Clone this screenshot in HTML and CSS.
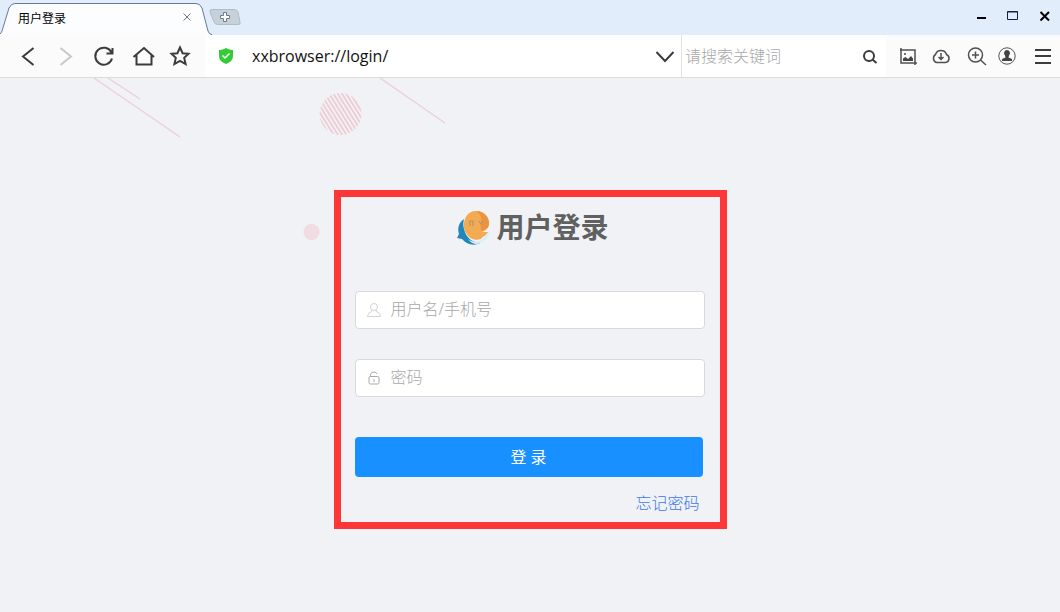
FILE: index.html
```html
<!DOCTYPE html>
<html lang="zh-CN">
<head>
    <meta charset="UTF-8">
    <meta name="viewport" content="width=device-width, initial-scale=1.0">
    <title>用户登录</title>
    <link rel="stylesheet" href="styles.css">
</head>
<body>
    <!-- Tab bar -->
    <header class="tab-bar">
        <div class="tab">
            <svg class="tab-shape" viewBox="0 0 212 35" aria-hidden="true">
                <path d="M-1 34.500 Q1 34 2 31 L9 8 Q11 3.500 15 3.500 H196 Q200 3.500 202 8 L208 31 Q209 34.500 212 34.500 V36 H-1 Z" fill="#fcfdfe" stroke="#66799c"/>
                <path d="M0 35 H210" stroke="#fcfdfe" stroke-width="2"/>
            </svg>
            <span class="tab-title">用户登录</span>
            <button type="button" class="tab-close" aria-label="关闭标签页">
                <svg viewBox="0 0 8 8" width="8" height="8"><path d="M.5 .5 L7.500 7.500 M7.500 .5 L.5 7.500" stroke="#777"/></svg>
            </button>
        </div>
        <button type="button" class="new-tab" aria-label="新建标签页">
            <svg viewBox="0 0 34 17" width="34" height="17">
                <path d="M3 .5 H25 Q28 .5 29 3 L31 13 Q32 15.500 29 15.500 H9 Q6 15.500 5 13 L1 3 Q0 .5 3 .5 Z" fill="#c7d1da" stroke="#b0bcc9"/>
                <path d="M14.500 3.500 h3 v3 h3 v3 h-3 v3 h-3 v-3 h-3 v-3 h3 Z" fill="#fff" stroke="#6f7b88"/>
            </svg>
        </button>
        <div class="window-controls">
            <button type="button" aria-label="最小化">
                <svg viewBox="0 0 12 12" width="12" height="12"><path d="M2 8 H11" stroke="#000" stroke-width="2"/></svg>
            </button>
            <button type="button" aria-label="最大化">
                <svg viewBox="0 0 12 12" width="12" height="12"><path d="M.5 1.500 H10.500 V9.500 H.5 Z M0 2 H11" fill="none" stroke="#14233c"/></svg>
            </button>
            <button type="button" aria-label="关闭">
                <svg viewBox="0 0 12 12" width="12" height="12"><path d="M1.500 2 L10 10.500 M10 2 L1.500 10.500" stroke="#000" stroke-width="2"/></svg>
            </button>
        </div>
    </header>

    <!-- Toolbar -->
    <div class="toolbar">
        <nav class="nav-buttons">
            <button type="button" aria-label="后退">
                <svg viewBox="0 0 24 24"><path d="M17.500 4 L7 12.500 L17.500 21"/></svg>
            </button>
            <button type="button" class="disabled" aria-label="前进">
                <svg viewBox="0 0 24 24"><path d="M6.500 4 L17 12.500 L6.500 21"/></svg>
            </button>
            <button type="button" aria-label="刷新">
                <svg viewBox="0 0 24 24"><path d="M19.500 8.500 A8.500 8.500 0 1 0 20 14.500 M20.500 4 V9.500 H14.500"/></svg>
            </button>
            <button type="button" aria-label="主页">
                <svg viewBox="0 0 24 24"><path d="M3.500 13 L14 4 L24 13 M6.500 11 V20.500 H21.500 V11"/></svg>
            </button>
            <button type="button" aria-label="收藏">
                <svg viewBox="0 0 24 24"><path d="M12 3.500 L14.600 9.200 L20.500 9.800 L16.200 13.900 L17.600 20 L12 16.800 L6.400 20 L7.800 13.900 L3.500 9.800 L9.400 9.200 Z"/></svg>
            </button>
        </nav>
        <div class="address-bar">
            <svg class="shield" viewBox="0 0 16 18" width="16" height="18" aria-hidden="true">
                <path d="M8 1 Q11 3 15 3 V9 Q15 14.500 8 17 Q1 14.500 1 9 V3 Q5 3 8 1 Z" fill="#35cb38"/>
                <path d="M4.500 8.500 L7 11 L11.500 6.500" fill="none" stroke="#fff" stroke-width="1.500"/>
            </svg>
            <input type="text" aria-label="地址" value="xxbrowser://login/">
            <button type="button" aria-label="展开地址列表">
                <svg viewBox="0 0 24 24"><path d="M4.500 8 L13 17 L21.500 8"/></svg>
            </button>
        </div>
        <div class="search-bar">
            <input type="text" aria-label="搜索" placeholder="请搜索关键词">
            <button type="button" aria-label="搜索">
                <svg viewBox="0 0 24 24"><circle cx="11" cy="12" r="5"/><path d="M14.500 15.500 L18.500 19"/></svg>
            </button>
        </div>
        <div class="tools">
            <button type="button" aria-label="截图">
                <svg viewBox="0 0 24 24" class="crop"><path d="M5 4 V19 H21 M4 6 H19 V21"/><path d="M7 17 V14.500 L9.500 13 L12 15 L15 12 L17 14.500 V17 Z" fill="#444" stroke="none"/><circle cx="9" cy="10" r="1" fill="#444" stroke="none"/></svg>
            </button>
            <button type="button" aria-label="下载">
                <svg viewBox="0 0 24 24" class="crop"><path d="M6.500 18.500 A4.500 4.500 0 0 1 5.500 10.500 A5.800 5.800 0 0 1 16.500 10.500 A4.200 4.200 0 0 1 15.500 18.500 Z M11 9 V15.500 M8.500 13 L11 15.500 L13.500 13"/></svg>
            </button>
            <button type="button" aria-label="缩放">
                <svg viewBox="0 0 24 24" class="medium"><circle cx="11.500" cy="11" r="7"/><path d="M16.500 16 L22 21 M8 11 H15 M11.500 7.500 V14.500"/></svg>
            </button>
            <button type="button" aria-label="账户">
                <svg viewBox="0 0 24 24" class="thin"><circle cx="9" cy="12" r="8.200"/><path d="M9 6 A3.200 3.200 0 0 1 11 11.500 L10.500 13.500 L14 15 V17 H4 V15 L7.500 13.500 L7 11.500 A3.200 3.200 0 0 1 9 6 Z" fill="#444" stroke="none"/></svg>
            </button>
            <button type="button" aria-label="菜单">
                <svg viewBox="0 0 24 24"><path d="M3 6 H19 M3 12 H19 M3 19 H19"/></svg>
            </button>
        </div>
    </div>

    <!-- Page content -->
    <main class="page">
        <svg class="decoration" width="460" height="180" viewBox="0 0 460 180" aria-hidden="true">
            <defs>
                <pattern id="stripes" width="3.600" height="4" patternUnits="userSpaceOnUse" patternTransform="rotate(-32)">
                    <rect width="1.700" height="4" fill="#efcad2"/>
                </pattern>
            </defs>
            <path d="M94 0 L180 59 M108 0 L140 21 M380 0 L445 45" stroke="#f0cdd4" stroke-width="1.300"/>
            <circle cx="340.500" cy="36" r="21" fill="url(#stripes)"/>
            <circle cx="311.500" cy="154" r="8" fill="#f2dbe1"/>
        </svg>

        <section class="login-container">
            <h1 class="login-header">
                <svg viewBox="0 0 34 36" width="34" height="36" aria-hidden="true">
                    <path d="M8 10 C3 13 1 19 3 25 L1 29 L6 30 C11 36 18 37 24 34 C16 33 11 29 9 23 C7 18 7 14 8 10 Z" fill="#2386bb"/>
                    <path d="M12 30 C17 34 23 33 27 30 L34 22 C33 29 28 33 21 35 C17 35 14 33 12 30 Z" fill="#d5effb"/>
                    <path d="M20 2 C28 2 33 8 33 14 C33 18 32 20 26 23 H32 C30 27 27 27 25 30 C16 33 10 27 8 19 C7 9 12 2 20 2 Z" fill="#f3aa50"/>
                    <path d="M20 2 C28 2 33 8 33 14 C33 18 31 20 26 22 C22 16 30 9 20 2 Z" fill="#ed933f"/>
                    <path d="M14 17 V12 H17 V17 M23 12 L25 15 L27 12" fill="none" stroke="#b2976d" stroke-width="1.200"/>
                </svg>
                <span>用户登录</span>
            </h1>

            <form class="login-form" id="loginForm">
                <div class="form-group">
                    <label for="userId" aria-label="用户名/手机号">
                        <svg viewBox="0 0 16 16" width="16" height="16"><circle cx="8" cy="5" r="3.500" fill="none" stroke="#d2d2d2"/><path d="M6 8 L5.500 9.500 Q1.500 11 1.500 14.500 H14.500 Q14.500 11 10.500 9.500 L10 8" fill="none" stroke="#d2d2d2"/></svg>
                    </label>
                    <input type="text" id="userId" name="userId" placeholder="用户名/手机号">
                </div>

                <div class="form-group">
                    <label for="password" aria-label="密码">
                        <svg viewBox="0 0 16 16" width="16" height="16"><path d="M4.500 7 V4.500 Q5 2 8 2 Q10.500 2 11 4 M4.500 6.500 H11.500 Q13 6.500 13 8 V12.500 Q13 14 11.500 14 H4.500 Q3 14 3 12.500 V8 Q3 6.500 4.500 6.500 Z M8 9 V12" fill="none" stroke="#a8a8a8"/></svg>
                    </label>
                    <input type="password" id="password" name="password" placeholder="密码">
                </div>

                <button type="submit" class="login-btn">登 录</button>
            </form>

            <div class="forgot-link">
                <a href="#">忘记密码</a>
            </div>
        </section>
    </main>
</body>
</html>
```
FILE: styles.css
```css
* {
    margin: 0;
    padding: 0;
    box-sizing: border-box;
    font-family: "Noto Sans", "Noto Sans CJK SC", sans-serif;
}

body {
    display: flex;
    flex-direction: column;
    min-height: 100vh;
    background-color: #f0f2f5;
}

button {
    border: none;
    background: none;
    cursor: pointer;
}

input {
    border: none;
    outline: none;
    background: none;
}

svg {
    display: block;
}

/* Tab bar */
.tab-bar {
    display: flex;
    height: 35px;
    background-color: #e1edfa;
}

.tab {
    position: relative;
    display: flex;
    align-items: center;
    justify-content: space-between;
    width: 209px;
    padding: 3px 18px 0;
}

.tab-shape {
    position: absolute;
    top: 0;
    left: 0;
    width: 212px;
    height: 35px;
}

.tab-title {
    position: relative;
    font-size: 12px;
    line-height: 16px;
    color: #000;
}

.tab-close {
    position: relative;
    padding-bottom: 4px;
}

.new-tab {
    align-self: flex-start;
    padding-top: 9px;
}

.window-controls {
    display: flex;
    align-items: center;
    gap: 20px;
    margin-left: auto;
    padding: 0 9px 4px 0;
}

/* Toolbar */
.toolbar {
    display: flex;
    height: 43px;
    background-color: #fbfbfb;
    border-bottom: 1px solid #dcdcdc;
}

.toolbar button {
    flex: none;
}

.toolbar button svg {
    width: 24px;
    height: 24px;
    fill: none;
    stroke: #3c3c3c;
    stroke-width: 2;
    overflow: visible;
}

.toolbar .disabled svg {
    stroke: #c8c8c8;
}

.toolbar button .thin {
    stroke: #555;
    stroke-width: 1;
}

.toolbar button .crop,
.toolbar button .medium {
    stroke: #505050;
    stroke-width: 1.5;
}

.nav-buttons {
    display: flex;
    align-items: center;
    gap: 14px;
    padding: 0 13px 0 16px;
}

.address-bar {
    display: flex;
    flex: 1;
    align-items: center;
    padding: 0 5px 0 13px;
    background-color: #fff;
}

.address-bar input {
    flex: 1;
    min-width: 0;
    margin-left: 18px;
    font-family: "Open Sans", sans-serif;
    font-size: 16px;
    color: #111;
}

.search-bar {
    display: flex;
    align-items: center;
    width: 205px;
    padding: 0 4px 0 3px;
    background-color: #fff;
    border-left: 1px solid #e2e2e2;
}

.search-bar input {
    flex: 1;
    min-width: 0;
    font-size: 16px;
}

.search-bar input::placeholder {
    font-weight: 300;
    color: #a8a8a8;
}

.tools {
    display: flex;
    align-items: center;
    gap: 10px;
    padding: 0 4px 0 10px;
}

/* Login page */
.page {
    position: relative;
    display: flex;
    flex: 1;
    flex-direction: column;
    align-items: center;
    padding: 112px 0 40px;
}

.decoration {
    position: absolute;
    top: 0;
    left: 0;
}

.login-container {
    position: relative;
    width: 393px;
    padding: 10px 15px 7px 14px;
    border: 7px solid #fd3737;
}

.login-header {
    display: flex;
    justify-content: center;
    align-items: center;
    gap: 6px;
    margin-bottom: 44px;
    padding-left: 6px;
    font-size: 28px;
    line-height: 40px;
    color: #606060;
}

.form-group {
    display: flex;
    align-items: center;
    height: 38px;
    margin-bottom: 30px;
    padding: 0 10px;
    background-color: #fff;
    border: 1px solid #d9d9d9;
    border-radius: 4px;
}

.form-group input {
    flex: 1;
    margin-left: 9px;
    padding-bottom: 2px;
    font-size: 16px;
    color: #333;
}

.form-group input::placeholder {
    font-weight: 300;
    color: #a8a8a8;
}

.login-btn {
    display: block;
    width: 348px;
    height: 40px;
    margin-top: 40px;
    padding-bottom: 2px;
    background-color: #1890ff;
    border-radius: 4px;
    font-size: 16px;
    color: #fff;
}

.login-btn:hover {
    background-color: #40a9ff;
}

.forgot-link {
    margin-top: 14px;
    padding-right: 5px;
    font-size: 16px;
    line-height: 24px;
    text-align: right;
}

.forgot-link a {
    font-weight: 300;
    color: #3a78ee;
    text-decoration: none;
}
```
